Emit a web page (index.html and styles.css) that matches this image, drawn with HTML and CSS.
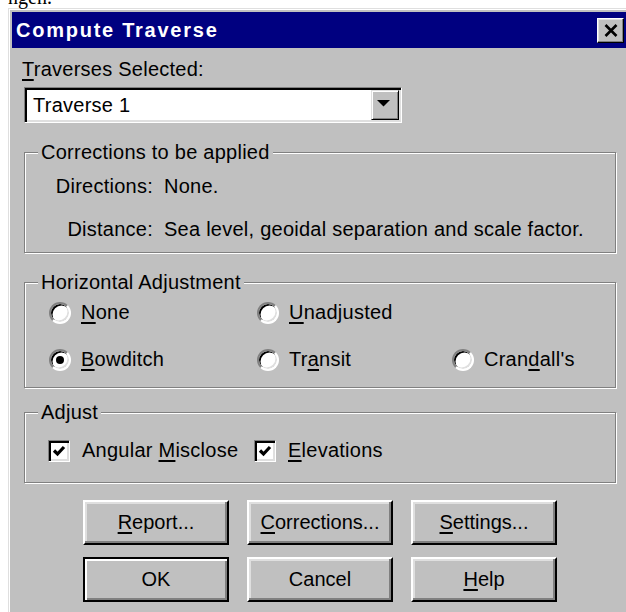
FILE: index.html
```html
<!DOCTYPE html>
<html lang="en">
<head>
<meta charset="utf-8">
<title>Compute Traverse</title>
<link rel="stylesheet" href="styles.css">
</head>
<body>
<div class="caption">ngen.</div>
<div class="window">
  <div class="titlebar">
    <span class="title">Compute Traverse</span>
    <button class="close" type="button" aria-label="Close">
      <svg width="14" height="13" viewBox="0 0 14 13"><path d="M1.5 1 L12.5 12 M12.5 1 L1.5 12" stroke="#000" stroke-width="2.6" fill="none"/></svg>
    </button>
  </div>
  <div class="content">
    <label class="field-label"><u>T</u>raverses Selected:</label>
    <div class="combo">
      <span class="combo-value">Traverse 1</span>
      <span class="combo-btn"><svg width="13" height="7" viewBox="0 0 13 7"><polygon points="0,0 13,0 6.5,6.5" fill="#000"/></svg></span>
    </div>

    <fieldset class="group">
      <legend>Corrections to be applied</legend>
      <div class="corr-grid">
        <span class="corr-key">Directions:</span><span>None.</span>
        <span class="corr-key">Distance:</span><span>Sea level, geoidal separation and scale factor.</span>
      </div>
    </fieldset>

    <fieldset class="group group-adjustment">
      <legend>Horizontal Adjustment</legend>
      <div class="options">
        <div class="option"><span class="radio"></span><span><u>N</u>one</span></div>
        <div class="option"><span class="radio"></span><span><u>U</u>nadjusted</span></div>
        <div></div>
        <div class="option"><span class="radio checked"></span><span><u>B</u>owditch</span></div>
        <div class="option"><span class="radio"></span><span>Tr<u>a</u>nsit</span></div>
        <div class="option"><span class="radio"></span><span>Cran<u>d</u>all's</span></div>
      </div>
    </fieldset>

    <fieldset class="group group-adjust">
      <legend>Adjust</legend>
      <div class="checks">
        <div class="check-item"><span class="checkbox"><svg width="16" height="16" viewBox="0 0 16 16"><polyline points="3,7.5 6.5,11 13,4" fill="none" stroke="#000" stroke-width="3.2"/></svg></span><span>Angular <u>M</u>isclose</span></div>
        <div class="check-item"><span class="checkbox"><svg width="16" height="16" viewBox="0 0 16 16"><polyline points="3,7.5 6.5,11 13,4" fill="none" stroke="#000" stroke-width="3.2"/></svg></span><span><u>E</u>levations</span></div>
      </div>
    </fieldset>

    <div class="buttons">
      <button class="btn" type="button"><u>R</u>eport...</button>
      <button class="btn" type="button"><u>C</u>orrections...</button>
      <button class="btn" type="button"><u>S</u>ettings...</button>
      <button class="btn btn-default" type="button">OK</button>
      <button class="btn" type="button">Cancel</button>
      <button class="btn" type="button"><u>H</u>elp</button>
    </div>
  </div>
</div>
</body>
</html>
```

FILE: styles.css
```css
html, body {
  margin: 0;
  padding: 0;
  background: #fff;
  overflow: hidden;
}

body {
  font-family: "Liberation Sans", Arial, sans-serif;
  font-size: 20px;
  line-height: 23px;
  letter-spacing: 0.25px;
  color: #000;
}

u {
  text-decoration-thickness: 2px;
  text-underline-offset: 3px;
}

/* end of the paragraph above the dialog */
.caption {
  font-family: "Liberation Serif", "Times New Roman", serif;
  font-size: 20px;
  line-height: 22px;
  height: 22px;
  letter-spacing: 0;
  margin: -14px 0 0 8px;
}

/* dialog frame */
.window {
  width: 616px;
  margin-left: 8px;
  padding: 3px;
  background: #c0c0c0;
  border: 1px solid;
  border-color: #dfdfdf #000 #000 #dfdfdf;
  box-shadow: inset 1px 1px #fff, inset -1px -1px #808080;
}

.titlebar {
  height: 36px;
  background: #000080;
  display: flex;
  align-items: center;
  padding-left: 4px;
}

.title {
  color: #fff;
  font-weight: bold;
  letter-spacing: 1.75px;
}

.close {
  margin-left: auto;
  margin-right: 4px;
  width: 27px;
  height: 25px;
  padding: 0;
  box-sizing: border-box;
  background: #c0c0c0;
  border: 1px solid;
  border-color: #fff #000 #000 #fff;
  box-shadow: inset -1px -1px #808080, inset 1px 1px #dfdfdf;
  display: flex;
  align-items: center;
  justify-content: center;
}

.content {
  padding: 10px 12px 30px;
}

.field-label {
  display: block;
  margin-left: -2px;
}

/* drop-down list */
.combo {
  margin-top: 6px;
  width: 378px;
  height: 36px;
  box-sizing: border-box;
  padding: 2px;
  background: #fff;
  border: 1px solid;
  border-color: #808080 #fff #fff #808080;
  box-shadow: inset 2px 2px #000, inset -2px -2px #dfdfdf;
  display: flex;
}

.combo-value {
  flex: 1;
  display: flex;
  align-items: center;
  padding-left: 6px;
}

.combo-btn {
  width: 28px;
  box-sizing: border-box;
  background: #c0c0c0;
  border: 1px solid;
  border-color: #dfdfdf #000 #000 #dfdfdf;
  box-shadow: inset 1px 1px #fff, inset -1px -1px #808080;
  display: flex;
  align-items: center;
  justify-content: center;
}

.combo-btn svg {
  margin: -3px 0 0 -4px;
}

/* group boxes */
.group {
  margin: 18px 0 0;
  padding: 0;
  min-inline-size: 0;
  border: 1px solid #808080;
  box-shadow: inset 1px 1px #fff, 1px 1px #fff;
}

.group legend {
  margin-left: 13px;
  padding: 0 3px;
  background: #c0c0c0;
  line-height: 23px;
}

.group-adjust {
  margin-top: 13px;
}

.corr-grid {
  display: grid;
  grid-template-columns: 128px auto;
  column-gap: 11px;
  row-gap: 20px;
  padding: 11px 0;
}

.corr-key {
  justify-self: end;
}

.options {
  display: grid;
  grid-template-columns: 208px 195px auto;
  row-gap: 24px;
  padding: 7px 0 16px 24px;
}

.option {
  display: flex;
  align-items: center;
  gap: 10px;
}

.radio {
  position: relative;
  width: 22px;
  height: 22px;
  box-sizing: border-box;
  border-radius: 50%;
  background: #fff;
  border: 2px solid;
  border-color: #808080 #fff #fff #808080;
  box-shadow: inset 1.5px 1.5px #000, inset -1.5px -1.5px #dfdfdf;
}

.radio.checked::after {
  content: "";
  position: absolute;
  left: 5px;
  top: 5px;
  width: 8px;
  height: 8px;
  border-radius: 50%;
  background: #000;
}

.checks {
  display: grid;
  grid-template-columns: 206px auto;
  padding: 15px 0 20px 23px;
}

.check-item {
  display: flex;
  align-items: center;
  gap: 12px;
}

.checkbox {
  width: 22px;
  height: 22px;
  box-sizing: border-box;
  background: #fff;
  border: 1px solid;
  border-color: #808080 #fff #fff #808080;
  box-shadow: inset 2px 2px #000, inset -2px -2px #dfdfdf;
  display: flex;
  align-items: center;
  justify-content: center;
}

/* push buttons */
.buttons {
  display: grid;
  grid-template-columns: repeat(3, 146px);
  gap: 12px 18px;
  justify-content: center;
  margin-top: 17px;
}

.btn {
  height: 45px;
  box-sizing: border-box;
  padding: 0;
  font: inherit;
  color: #000;
  background: #c0c0c0;
  border: 2px solid;
  border-color: #fff #000 #000 #fff;
  box-shadow: inset -2px -2px #808080, inset 2px 2px #dfdfdf;
}

.btn-default {
  border-color: #000;
  box-shadow: inset 2px 2px #fff, inset -2px -2px #808080;
}
```
